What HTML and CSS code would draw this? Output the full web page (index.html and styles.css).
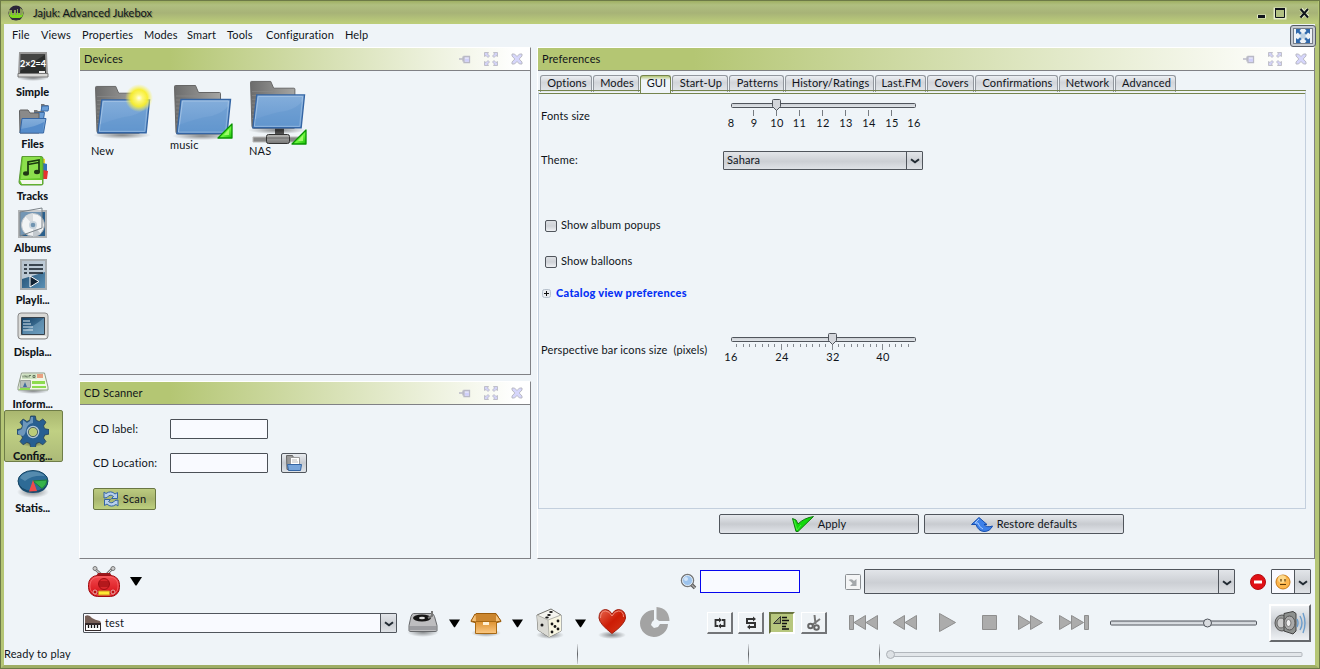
FILE: index.html
```html
<!DOCTYPE html>
<html lang="en">
<head>
<meta charset="utf-8">
<title>Jajuk: Advanced Jukebox</title>
<link rel="stylesheet" href="styles.css">
</head>
<body>
<svg class="defs" width="0" height="0">
  <defs>
    <linearGradient id="gGray" x1="0" y1="0" x2="1" y2="0"><stop offset="0" stop-color="#6c6c6c"/><stop offset="1" stop-color="#a5a5a3"/></linearGradient>
    <linearGradient id="gBlue" x1="0" y1="0" x2="0" y2="1"><stop offset="0" stop-color="#84aedb"/><stop offset="1" stop-color="#6497cf"/></linearGradient>
    <linearGradient id="gNavy" x1="0" y1="0" x2="1" y2="1"><stop offset="0" stop-color="#123e62"/><stop offset="1" stop-color="#5d93b8"/></linearGradient>
    <linearGradient id="gSilver" x1="0" y1="0" x2="0" y2="1"><stop offset="0" stop-color="#b5b5b3"/><stop offset="1" stop-color="#777"/></linearGradient>
    <linearGradient id="gTrack" x1="0" y1="0" x2="0" y2="1"><stop offset="0" stop-color="#c8ccd2"/><stop offset="1" stop-color="#e4e8ec"/></linearGradient>
    <linearGradient id="gRed" x1="0" y1="0" x2="0" y2="1"><stop offset="0" stop-color="#f34c50"/><stop offset="1" stop-color="#d30b12"/></linearGradient>
    <linearGradient id="gHeart" x1="0" y1="0" x2="1" y2="1"><stop offset="0" stop-color="#e86850"/><stop offset=".5" stop-color="#cc1c05"/><stop offset="1" stop-color="#d63a1c"/></linearGradient>
    <linearGradient id="gBox" x1="0" y1="0" x2="0" y2="1"><stop offset="0" stop-color="#dd9232"/><stop offset="1" stop-color="#fbc882"/></linearGradient>
    <linearGradient id="gCorner" x1="0" y1="0" x2="1" y2="1"><stop offset="0" stop-color="#1fc40c"/><stop offset=".6" stop-color="#6cf63e"/><stop offset="1" stop-color="#12b804"/></linearGradient>
    <radialGradient id="gGlow"><stop offset="0" stop-color="#fffff0"/><stop offset=".25" stop-color="#fdf77a"/><stop offset=".6" stop-color="#f8ee2c" stop-opacity=".95"/><stop offset="1" stop-color="#f6f06a" stop-opacity="0"/></radialGradient>
    <radialGradient id="gShadow"><stop offset="0" stop-color="#000" stop-opacity=".45"/><stop offset="1" stop-color="#000" stop-opacity="0"/></radialGradient>
    <symbol id="pin" viewBox="0 0 12 12"><path d="M0 6H4M4 3.500v5M5 3.500h5.500v6H5z" fill="#e2e2fa" stroke="#b9b9c6" stroke-width="1.300"/><path d="M6 6h4v2.500H6z" fill="#d0d0fa"/></symbol>
    <symbol id="expand" viewBox="0 0 14 14"><g fill="#d3d3f8" stroke="#b5b5be" stroke-width=".8"><path d="M.5.500h4L3.500 2 5.500 4 4 5.500 2 3.500.500 4.500z"/><path d="M13.500.500v4L12 3.500 10 5.500 8.500 4 10.500 2 9.500.500z"/><path d="M.5 13.500v-4l1.500 1 2-2L5.500 10l-2 2 1 1.500z"/><path d="M13.500 13.500h-4l1-1.500-2-2L10 8.500l2 2 1.500-1z"/></g></symbol>
    <symbol id="close" viewBox="0 0 12 12"><path d="M1 1h2.500L6 3.500 8.500 1H11v2L8.200 6 11 9v2H8.500L6 8.500 3.500 11H1V9l2.800-3L1 3z" fill="#d6d6fb" stroke="#b5b5be" stroke-width=".9"/></symbol>
    <symbol id="folder" viewBox="0 0 62 56"><ellipse cx="30" cy="52" rx="30" ry="4" fill="url(#gShadow)"/><path d="M2.500 2.500q0-1 1-1h20l3 7h21q1 0 1 1V49q0 1-1 1H6q-2 0-2-2z" fill="url(#gGray)" stroke="#666" /><path d="M4 12h22M4 16h22M4 20h5M4 24h5M4 28h5M4 32h5M4 36h4M4 40h4" stroke="#8e8e8e" opacity=".6"/><path d="M9 15.500h49.500L55 49.500H5z" fill="url(#gBlue)" stroke="#3465a4" stroke-width="1.400"/><path d="M10.500 17h46L53.500 48H6.500z" fill="none" stroke="#a9c7e6" stroke-width=".8"/><path d="M7 41Q25 34 40 32 52 28 56 22l-2 26H7z" fill="#5c92cc" opacity=".35"/></symbol>
    <symbol id="corner" viewBox="0 0 16 16"><path d="M1 15L15 1v14z" fill="url(#gCorner)" stroke="#089400" stroke-width="1.300" stroke-linejoin="round"/><path d="M7 12l5-6v6z" fill="#b5ff7c" opacity=".75"/></symbol>
    <symbol id="down" viewBox="0 0 12 9"><path d="M0 0h12L6.500 8.500h-1z" fill="#000"/></symbol>
    <symbol id="chev" viewBox="0 0 10 6"><path d="M1 1.200L5 4.300 9 1.200" fill="none" stroke="#222b33" stroke-width="2"/></symbol>
  </defs>
</svg>

<div class="window">
  <header class="titlebar">
    <svg class="app-icon" width="16" height="16" viewBox="0 0 16 16"><circle cx="8" cy="8" r="7.500" fill="#2b2638"/><path d="M1 5h3v3h2V5h2v3h1V4h1v4h2V3l3 2v5H1z" fill="#8c9c5c"/><path d="M1 8l2 2V7h1v3h2V8h1v2h2V7h1v3h1V8h1v2h2V8l1 1q0 3-2 4H3Q1 11 1 8z" fill="#7ed81f"/><path d="M2 12q6 3 12 0l-2 3H4z" fill="#35323f"/></svg>
    <span class="title">Jajuk: Advanced Jukebox</span>
    <svg width="52" height="14" viewBox="0 0 52 14"><g fill="none" stroke="#e4ebc8" stroke-width="4"><path d="M0 10.500h9M18.500 3.500h9v8h-9zM44 3l7 8M51 3l-7 8"/></g><path d="M1 9h7v3H1z" fill="#10141c"/><path d="M18.500 3.500h9v8h-9z" fill="#b2c083" stroke="#10141c"/><path d="M18 3h10" stroke="#10141c" stroke-width="2"/><path d="M43.500 3l7.500 8.500M51 3L43.500 11.500" stroke="#10141c" stroke-width="2"/></svg>
  </header>

  <nav class="menubar">
    <span class="m1">File</span><span class="m2">Views</span><span class="m3">Properties</span><span class="m4">Modes</span><span class="m5">Smart</span><span class="m6">Tools</span><span class="m7">Configuration</span><span class="m8">Help</span>
    <button class="fullscreen"><svg width="14" height="14" viewBox="0 0 14 14"><path d="M2 2l10 10M12 2L2 12" stroke="#bcd0e2" stroke-width="3"/><path d="M0 0h5L3.500 2 5.500 4 4 5.500 2 3.500 0 5zM14 0v5l-2-1.500L10 5.500 8.500 4l2-2L9 0zM0 14V9l2 1.500 2-2L5.500 10l-2 2L5 14zM14 14H9l1.500-2-2-2L10 8.500l2 2L14 9z" fill="#2f68ac"/></svg></button>
  </nav>

  <div class="main">
    <aside class="perspectives">
      <div class="persp"><svg width="32" height="32" viewBox="0 0 32 32"><ellipse cx="16" cy="27" rx="16" ry="3" fill="url(#gShadow)"/><path d="M3 2h26l1 21H2z" fill="#2b2d2c" stroke="#999" stroke-width="2"/><path d="M3 3h26L3 20z" fill="#555" opacity=".6"/><path d="M1 22.500h30V26H1z" fill="#d7d7d5" stroke="#777"/><path d="M22 20h6v2h-6z" fill="#eee"/><text class="board" x="16" y="16">2×2=4</text></svg><span>Simple</span></div>
      <div class="persp"><svg width="32" height="32" viewBox="0 0 32 32"><g><path d="M17 7h3l1 1h6v9H17zM24 1h3l1 1h3v6h-7z" fill="#777"/><path d="M17.500 9.500h10l-1 7h-10zM25 3h7l-1 5h-7z" fill="#6b9ed6" stroke="#3d6da8"/></g><path d="M2.500 8q0-1 1-1H11l2 3h9v20H3z" fill="#8a8a8a" stroke="#5f5f5f"/><path d="M5 15.500h24L26.500 30H3z" fill="url(#gBlue)" stroke="#3465a4"/><path d="M4 26q14-2 23-7l-1.500 10H4z" fill="#558ccb"/></svg><span>Files</span></div>
      <div class="persp"><svg width="32" height="32" viewBox="0 0 32 32"><path d="M24 3l4 1v8h-4z" fill="#f1d32b"/><path d="M26 8l4 1v8h-4z" fill="#3470bb"/><path d="M26 15l5 1-1 8h-4z" fill="#e5322f"/><path d="M5 1.500h19q2 0 2 2V29q0 1-2 1H4q-2-1-2-3z" fill="#68c82b" stroke="#5a9a34"/><path d="M3 25h22v4H5z" fill="#f4f8ee"/><path d="M6 2h17v21L4 24z" fill="#9be85b" opacity=".7"/><path d="M11 18V7l11-2v12M11 9.500l11-2" fill="none" stroke="#1b3a10" stroke-width="1.700"/><ellipse cx="9" cy="18.500" rx="3" ry="2.200" fill="#203615"/><ellipse cx="20" cy="17" rx="3" ry="2.200" fill="#203615"/></svg><span>Tracks</span></div>
      <div class="persp"><svg width="32" height="32" viewBox="0 0 32 32"><path d="M2 4h27v26H2z" fill="#2a5f8c" stroke="#b0b3b5" stroke-width="2"/><circle cx="16" cy="18" r="11.500" fill="#eceef0" stroke="#9da4aa"/><path d="M16 18L8 9l8-3zM16 18l8 9-8 3z" fill="#c3c9ce"/><circle cx="16" cy="18" r="4" fill="#aebfcb"/><circle cx="16" cy="18" r="2.300" fill="#245b88"/><path d="M3 5L25 1v20L3 29z" fill="#fff" fill-opacity=".35" stroke="#7b8389"/></svg><span>Albums</span></div>
      <div class="persp"><svg width="32" height="32" viewBox="0 0 32 32"><path d="M4 1h25v29H4z" fill="url(#gNavy)" stroke="#a7adb0" stroke-width="2"/><path d="M5 2h23v11L5 20z" fill="#dfe4e8" opacity=".8"/><path d="M7 6h3M7 10h3M7 14h3M12 6h14M12 10h14M12 14h14" stroke="#111b24" stroke-width="1.700"/><path d="M13 17l9 5.500-9 5.500z" fill="#123" stroke="#fff"/></svg><span>Playli<span class="dots">...</span></span></div>
      <div class="persp"><svg width="32" height="32" viewBox="0 0 32 32"><rect x="1" y="2" width="30" height="26" rx="3" fill="#d9d9d6" stroke="#888"/><path d="M4.500 6.500h23v17h-23z" fill="url(#gNavy)" stroke="#39424b"/><path d="M6 20Q16 16 27 7v16H6z" fill="#7fabc8" opacity=".5"/><path d="M6 10h7M6 13h8M6 16h10M6 19h10" stroke="#dce8f0"/><path d="M3 25h26v2H3z" fill="#f4f4f2"/></svg><span>Displa<span class="dots">...</span></span></div>
      <div class="persp"><svg width="32" height="32" viewBox="0 0 32 32"><ellipse cx="16" cy="28" rx="16" ry="3" fill="url(#gShadow)"/><path d="M4.500 10h23l3.500 14v3H1v-3z" fill="#f0f7e8" stroke="#8f9b87"/><path d="M5.500 11h14v5H5z" fill="#cfe2c2"/><path d="M6 14.500v-2M8 14.500v-2l2 2v-2M12 14.500v-2h2M16 12.500h2v2h-2z" fill="none" stroke="#667760"/><path d="M20 11h6v4h-6z" fill="#e8a181"/><path d="M3.500 17.500h10v7H3z" fill="#b7bfb9" stroke="#9aa19a"/><path d="M8 19l2 5H6z" fill="#416c9b"/><path d="M15 18h13v3H15zM15 23h14v2H15zM3 25h10v2H2z" fill="#8ddb50"/></svg><span>Inform<span class="dots">...</span></span></div>
      <div class="persp selected"><svg width="32" height="32" viewBox="0 0 32 32"><ellipse cx="16" cy="28" rx="13" ry="4" fill="url(#gShadow)"/><path d="M13.700 1h4.600l.9 4.300 3 1.200 3.600-2.500 3.200 3.200-2.500 3.700 1.200 2.800 4.300.9v4.500l-4.300.9-1.200 3 2.500 3.600-3.200 3.200-3.700-2.500-2.900 1.200-.9 4.300h-4.600l-.9-4.300-2.900-1.200-3.700 2.500L3 26.600l2.500-3.700-1.200-2.900L0 19.100v-4.500l4.300-.9 1.200-2.800L3 7.200 6.200 4l3.700 2.500 2.900-1.200z" fill="#285f91" stroke="#253f57" stroke-width=".8"/><path d="M6 5l4 3 3-2 1-4h2l0 6q-6 1-7 7t-4 6l-4-2v-3l4-2 1-4z" fill="#92b5d2" opacity=".65"/><circle cx="16" cy="17" r="5.500" fill="#bacc78" stroke="#b3c8d7" stroke-width="1.500"/><circle cx="16" cy="17" r="4.600" fill="#bdcd79" stroke="#314b60" stroke-width=".8"/></svg><span>Config<span class="dots">...</span></span></div>
      <div class="persp"><svg width="32" height="32" viewBox="0 0 32 32"><ellipse cx="16" cy="25" rx="16" ry="6" fill="url(#gShadow)"/><path d="M1 14v2q2 10 15 10t15-10v-2z" fill="#174b6f"/><ellipse cx="16" cy="14" rx="15" ry="10.500" fill="#2e6b96" stroke="#184765"/><path d="M3 11Q6 5 16 4.500 23 4.500 28 9q-13-1-20 5z" fill="#76a5c2" opacity=".55"/><path d="M16 14l14-1q0 5-5 8.500z" fill="#36b34b" stroke="#1d7e36"/><path d="M16 13l4 11-8 .5z" fill="#ee4b4b"/></svg><span>Statis<span class="dots">...</span></span></div>
    </aside>

    <div class="left-col">
      <section class="view devices">
        <h2 class="view-head"><span>Devices</span><svg width="12" height="12"><use href="#pin"/></svg><svg width="14" height="14"><use href="#expand"/></svg><svg width="12" height="12"><use href="#close"/></svg></h2>
        <div class="device-list">
          <figure class="dev new"><svg width="64" height="60" viewBox="0 0 64 60"><use href="#folder" x="2" y="5" width="60" height="54"/><circle cx="48" cy="18" r="14" fill="url(#gGlow)"/></svg><figcaption>New</figcaption></figure>
          <figure class="dev music"><svg width="66" height="58" viewBox="0 0 66 58"><use href="#folder" x="2" y="2" width="62" height="56"/><use href="#corner" x="47" y="41" width="16" height="16"/></svg><figcaption>music</figcaption></figure>
          <figure class="dev nas"><svg width="62" height="66" viewBox="0 0 62 66"><path d="M4 57h52v5H4z" fill="#888" stroke="#bbb"/><path d="M26 48h9v8h-9z" fill="#555"/><rect x="17.500" y="54.500" width="23" height="9" rx="2" fill="url(#gSilver)" stroke="#333"/><path d="M18 58h22" stroke="#666"/><use href="#folder" x="-1" y="0" width="60" height="54"/><use href="#corner" x="42" y="49" width="16" height="16"/></svg><figcaption>NAS</figcaption></figure>
        </div>
      </section>
      <section class="view scanner">
        <h2 class="view-head"><span>CD Scanner</span><svg width="12" height="12"><use href="#pin"/></svg><svg width="14" height="14"><use href="#expand"/></svg><svg width="12" height="12"><use href="#close"/></svg></h2>
        <div class="scan-form">
          <div class="scan-row"><label>CD label:</label><input class="text-in" type="text"></div>
          <div class="scan-row"><label>CD Location:</label><input class="text-in" type="text"><button class="browse"><svg width="16" height="16" viewBox="0 0 16 16"><path d="M.5.500h6l1 2h5v12H1z" fill="#999" stroke="#666"/><path d="M4.500 2.500h9v9h-9z" fill="#fff" stroke="#999"/><path d="M6 5h5M6 7h6" stroke="#bbb"/><path d="M1.500 9.500h14l-1 6h-12z" fill="#76a4da" stroke="#3465a4"/></svg></button></div>
          <button class="scan-btn"><svg width="16" height="16" viewBox="0 0 16 16"><path d="M1 7V1l2 1.500Q8-1 12 3l2.500-1.500V7.500H8.500l2-2Q7 2.500 4 6.500z" fill="#b8d0ec" stroke="#3465a4"/><path d="M15 9v6l-2-1.500Q8 17 4 13l-2.500 1.500V8.500h6l-2 2Q9 13.500 12 9.500z" fill="#b8d0ec" stroke="#3465a4"/></svg><span>Scan</span></button>
        </div>
      </section>
    </div>

    <section class="view prefs">
      <h2 class="view-head"><span>Preferences</span><svg width="12" height="12"><use href="#pin"/></svg><svg width="14" height="14"><use href="#expand"/></svg><svg width="12" height="12"><use href="#close"/></svg></h2>
      <div class="tabs">
        <span class="tab t1">Options</span><span class="tab t2">Modes</span><span class="tab t3 active">GUI</span><span class="tab t4">Start-Up</span><span class="tab t5">Patterns</span><span class="tab t6">History/Ratings</span><span class="tab t7">Last.FM</span><span class="tab t8">Covers</span><span class="tab t9">Confirmations</span><span class="tab t10">Network</span><span class="tab t11">Advanced</span>
      </div>
      <div class="tab-page">
        <div class="pref-row fonts"><label>Fonts size</label>
          <svg class="slider" width="200" height="36" viewBox="0 0 200 36"><rect x="8.500" y="9.500" width="184" height="4" rx="1" fill="url(#gTrack)" stroke="#50555c"/><path d="M30.500 16v6M53.500 16v6M76.500 16v6M99.500 16v6M122.500 16v6M145.500 16v6M168.500 16v6" stroke="#777c82"/><path d="M49.500 6.500q0-1 1-1h6q1 0 1 1v6l-4 4-4-4z" fill="#d3d6db" stroke="#50555c"/><g class="tick-labels"><text x="8" y="33">8</text><text x="31" y="33">9</text><text x="54" y="33">10</text><text x="76.500" y="33">11</text><text x="100" y="33">12</text><text x="123" y="33">13</text><text x="146" y="33">14</text><text x="169" y="33">15</text><text x="191" y="33">16</text></g></svg>
        </div>
        <div class="pref-row theme"><label>Theme:</label><div class="combo"><span>Sahara</span><i class="drop"><svg width="10" height="6"><use href="#chev"/></svg></i></div></div>
        <label class="check album"><i></i>Show album popups</label>
        <label class="check balloons"><i></i>Show balloons</label>
        <div class="catalog"><svg width="9" height="9" viewBox="0 0 9 9"><rect x=".5" y=".5" width="8" height="8" rx="2" fill="#e7eaef" stroke="#b7c1cc"/><path d="M2 4.500h5M4.500 2v5" stroke="#111"/></svg><b>Catalog view preferences</b></div>
        <div class="pref-row icons"><label>Perspective bar icons size&nbsp; (pixels)</label>
          <svg class="slider" width="200" height="36" viewBox="0 0 200 36"><rect x="8.500" y="9.500" width="184" height="4" rx="1" fill="url(#gTrack)" stroke="#50555c"/><path d="M13.500 16v3M20.500 16v3M26.500 16v3M32.500 16v3M39.500 16v3M45.500 16v3M51.500 16v3M64.500 16v3M70.500 16v3M77.500 16v3M83.500 16v3M89.500 16v3M96.500 16v3M102.500 16v3M115.500 16v3M121.500 16v3M128.500 16v3M134.500 16v3M140.500 16v3M147.500 16v3M153.500 16v3M166.500 16v3M172.500 16v3M178.500 16v3M185.500 16v3M58.500 16v6M109.500 16v6M159.500 16v6" stroke="#858a90"/><path d="M105.500 6.500q0-1 1-1h6q1 0 1 1v6l-4 4-4-4z" fill="#d3d6db" stroke="#50555c"/><g class="tick-labels"><text x="8" y="33">16</text><text x="59" y="33">24</text><text x="110" y="33">32</text><text x="160" y="33">40</text></g></svg>
        </div>
      </div>
      <div class="actions">
        <button class="wide"><svg width="22" height="16" viewBox="0 0 22 16"><path d="M.5 2.500L4 4l2 4Q12 2 21.500.500L6 15.500H4z" fill="#13d90c" stroke="#127a10"/><path d="M2 4l3 10 4-5" fill="none" stroke="#49f03d"/></svg><span>Apply</span></button>
        <button class="wide restore"><svg width="22" height="15" viewBox="0 0 22 15"><path d="M8 .5L.500 7.500H5Q7 14 13 14.500 19 14.500 21.500 9 16 11 13 7.500H16z" fill="#3d80e8" stroke="#164eae"/><path d="M8 2L4 6h3q1 4 5 6" fill="none" stroke="#a6cbff"/></svg><span>Restore defaults</span></button>
      </div>
    </section>
  </div>

  <div class="bar search-bar">
    <svg class="radio" width="34" height="32" viewBox="0 0 34 32"><path d="M8 3l9 8 8-8" fill="none" stroke="#777" stroke-width="2.500"/><path d="M8 3l9 8 8-8" fill="none" stroke="#ddd"/><circle cx="8" cy="2.500" r="2" fill="#ccc" stroke="#777"/><circle cx="26" cy="2.500" r="2" fill="#ccc" stroke="#777"/><path d="M11 7h12l2 3H9z" fill="#99191d"/><rect x="1.500" y="9.500" width="31" height="21" rx="9" fill="url(#gRed)" stroke="#a10d12"/><rect x="3" y="11" width="28" height="18" rx="8" fill="none" stroke="#f8696c" stroke-width=".8"/><circle cx="17" cy="18" r="5.500" fill="#d9272b" stroke="#a10d12"/><path d="M12 16h10M11.500 18h11M12 20h10" stroke="#8f0a0e"/><circle cx="8" cy="26" r="2" fill="#b11" stroke="#e9aaaa"/><circle cx="26" cy="26" r="2" fill="#b11" stroke="#e9aaaa"/><path d="M11.500 25h11v4h-11z" fill="#ffe833" stroke="#c89325"/></svg>
    <svg class="arrow-a" width="12" height="9"><use href="#down"/></svg>
    <svg class="lens" width="17" height="17" viewBox="0 0 17 17"><path d="M11 11l4 4" stroke="#555" stroke-width="3.500"/><path d="M11 11l4 4" stroke="#aaa" stroke-width="1.500"/><circle cx="7.500" cy="7.500" r="6" fill="#9cc3ed" stroke="#777" stroke-width="1.500"/><circle cx="7.500" cy="7.500" r="5" fill="none" stroke="#e3edf6"/><circle cx="6" cy="6" r="2" fill="#d2e5f8"/></svg>
    <input class="search" type="text">
    <svg class="goto" width="16" height="16" viewBox="0 0 16 16"><rect x=".5" y=".5" width="15" height="15" rx="1" fill="#f4f5f6" stroke="#8b8f93"/><path d="M3.500 6Q7 4 9 7l2.500-2v7H5l2.500-2.500Q6 7 3.500 6z" fill="#a4a8ab"/></svg>
    <div class="combo history"><span></span><i class="drop"><svg width="10" height="6"><use href="#chev"/></svg></i></div>
    <svg class="ban" width="16" height="16" viewBox="0 0 16 16"><circle cx="8" cy="8" r="7.500" fill="#e01015" stroke="#b30c10"/><path d="M4 6.500h8v3H4z" fill="#fff"/></svg>
    <div class="combo mood"><span><svg width="16" height="16" viewBox="0 0 16 16"><circle cx="8" cy="8" r="7" fill="#fcb64d" stroke="#c97a16"/><circle cx="7" cy="5" r="4" fill="#fff0b8" opacity=".6"/><path d="M6 5v2.500M10 5v2.500M5 10.500h6" stroke="#5c3a09" stroke-width="1.200"/></svg></span><i class="drop"><svg width="10" height="6"><use href="#chev"/></svg></i></div>
  </div>

  <div class="bar player-bar">
    <div class="combo ambience"><span><svg width="16" height="16" viewBox="0 0 16 16"><path d="M0 9V1q4-2 7 2 3 2 8 3 1 1 1 3z" fill="#765f57"/><path d="M0 8h16v8H0z" fill="#33292a"/><path d="M1 10h14v5H1z" fill="#fff"/><path d="M3.500 10v3M6.500 10v3M9.500 10v3M12.500 10v3" stroke="#111" stroke-width="1.300"/></svg>test</span><i class="drop"><svg width="10" height="6"><use href="#chev"/></svg></i></div>
    <svg class="ic deck" width="32" height="32" viewBox="0 0 32 32"><ellipse cx="16" cy="25" rx="16" ry="5" fill="url(#gShadow)"/><path d="M6.500 6.500h18q2 0 3 3l2.500 9v5q0 1-2 1H4q-2 0-2-1v-5l2-9q1-3 2.500-3z" fill="#bdbdbf" stroke="#66686b"/><path d="M3 19h26v4H3z" fill="#9b9ca0"/><ellipse cx="15" cy="11" rx="9" ry="3.500" fill="#151515"/><ellipse cx="15" cy="11" rx="3" ry="1.200" fill="#ddd"/><path d="M25 4v5l-4 2" fill="none" stroke="#777" stroke-width="2"/></svg>
    <svg class="dd" width="11" height="9"><use href="#down"/></svg>
    <svg class="ic box" width="32" height="32" viewBox="0 0 32 32"><ellipse cx="16" cy="26" rx="15" ry="4" fill="url(#gShadow)"/><path d="M6 6.500h20l5 8-4 1H5l-4-1z" fill="#e8a754" stroke="#9b5c0c"/><path d="M6 7h20v7H6z" fill="#cb862f"/><path d="M5.500 14.500h21v12h-21z" fill="url(#gBox)" stroke="#a86914"/><path d="M5 7L1 14l5 1M26 7l5 7-5 1" fill="#f6c178" stroke="#9b5c0c"/><path d="M13 15h6v3h-6z" fill="#fff0d4"/></svg>
    <svg class="dd" width="11" height="9"><use href="#down"/></svg>
    <svg class="ic dice" width="32" height="32" viewBox="0 0 32 32"><ellipse cx="17" cy="28" rx="14" ry="4" fill="url(#gShadow)"/><path d="M18 2L4 8l1 15 11 7 12-6V8z" fill="#f4f4ef" stroke="#73736e"/><path d="M4 8l11 5 1 17L5 23z" fill="#dadad4"/><path d="M15 13l13-5v16l-12 6z" fill="#f8f6e2"/><path d="M4 8l11 5 13-5M15 13l1 16" fill="none" stroke="#b0b0a9"/><g fill="#171717"><ellipse cx="18" cy="5" rx="1.800" ry="1"/><ellipse cx="16" cy="8" rx="1.800" ry="1"/><ellipse cx="14" cy="10.500" rx="1.800" ry="1"/><circle cx="9" cy="18" r="1.500"/><circle cx="19" cy="17" r="1.400"/><circle cx="25" cy="14" r="1.400"/><circle cx="22" cy="19.500" r="1.400"/><circle cx="19" cy="25" r="1.400"/><circle cx="25" cy="22" r="1.400"/></g></svg>
    <svg class="dd" width="11" height="9"><use href="#down"/></svg>
    <svg class="ic heart" width="32" height="32" viewBox="0 0 32 32"><ellipse cx="16" cy="28" rx="14" ry="4" fill="url(#gShadow)"/><path d="M16 26.500Q3.500 17 3 11 3 3 9.500 2.500q4 0 6.500 4.500Q18.500 2.500 22.500 2.500q7 .5 7 8.500-.5 6-13.500 15.500z" fill="url(#gHeart)" stroke="#9e1c0d"/><path d="M4.500 11q0-7 5-7 4 0 6.500 5Q18.500 4 22.500 4q5 0 5 6" fill="none" stroke="#ef8c7b"/></svg>
    <svg class="ic pie" width="32" height="32" viewBox="0 0 32 32"><path d="M15 3A14 13.500 0 1 0 29 17h-8l-2 3-4 1-3-3 1-3 2-2z" fill="#a3a3a3"/><path d="M17.500 0Q30 1 30.500 14H20l-2.500-2z" fill="#a6a6a6"/></svg>
    <div class="modes">
      <span class="mode"><svg width="14" height="14" viewBox="0 0 14 14"><path d="M6 4H2.500v6H5M8 10h3.500V4H9" fill="none" stroke="#333" stroke-width="1.800"/><path d="M6 1.500L9 4 6 6.500zM8 7.500L5 10l3 2.500z" fill="#333"/></svg></span>
      <span class="mode"><svg width="14" height="14" viewBox="0 0 14 14"><path d="M10 3H3v4h8v4H5" fill="none" stroke="#333" stroke-width="2"/><path d="M9 0.500L12 3 9 5.500zM6 8.500L3 11l3 2.500z" fill="#333"/></svg></span>
      <span class="mode on"><svg width="18" height="14" viewBox="0 0 18 14"><path d="M.5 7.500L7.500.500v7z" fill="#8f9b69" stroke="#333"/><path d="M9 1.500h5M9 4.500h7M9 7.500h5M9 10.500h4M9 13h7" stroke="#111" stroke-width="1.700"/></svg></span>
      <span class="mode"><svg width="14" height="16" viewBox="0 0 14 16"><path d="M7.500 0l1 9M13 4L5 10" stroke="#777" stroke-width="2"/><circle cx="3.500" cy="11" r="2.300" fill="none" stroke="#666" stroke-width="2"/><circle cx="9.500" cy="12.500" r="2.300" fill="none" stroke="#666" stroke-width="2"/></svg></span>
    </div>
    <svg class="transport" width="242" height="22" viewBox="0 0 242 22"><g fill="#acacac" stroke="#8e8e8e"><path d="M1.500 3.500h4v14h-4zM17.500 3.500v14L6 10.500zM29.500 3.500v14L18 10.500z"/><path d="M56.500 3.500v14L45 10.500zM68.500 3.500v14L57 10.500z"/><path d="M91.500 1.500v18l16-9z"/><path d="M134.500 3.500h14v14h-14z"/><path d="M170.500 3.500v14l12-7zM182.500 3.500v14l12-7z"/><path d="M211.500 3.500v14l12-7zM223.500 3.500v14l12-7zM236.500 3.500h4v14h-4z"/></g></svg>
    <svg class="volume" width="148" height="12" viewBox="0 0 148 12"><rect x=".5" y="4" width="146" height="4" rx="1" fill="url(#gTrack)" stroke="#50555c"/><circle cx="97.500" cy="6" r="4" fill="#d9dce0" stroke="#50555c"/></svg>
    <button class="mute"><svg width="32" height="24" viewBox="0 0 32 24"><ellipse cx="8" cy="12" rx="7" ry="8" fill="#9b9d9c" stroke="#555"/><ellipse cx="7" cy="12" rx="4" ry="5" fill="#ccc" stroke="#666"/><path d="M10 2.500l9-2 3 2V20l-3 3-9-3z" fill="#8d908e" stroke="#444"/><ellipse cx="15.500" cy="12" rx="5.500" ry="7" fill="#aaa" stroke="#555"/><ellipse cx="14.500" cy="12" rx="2.500" ry="3.500" fill="#eee" stroke="#777"/><path d="M23 8q2 4 0 8M26 5q4 7 0 14M29 2q4 10 0 20" fill="none" stroke="#6c9dcc" stroke-width="1.400"/></svg></button>
  </div>

  <footer class="status">
    <span class="st-text">Ready to play</span><i class="sep s1"></i><i class="sep s2"></i><i class="sep s3"></i>
    <svg class="progress" width="418" height="10" viewBox="0 0 418 10"><rect x="4" y="3.500" width="412" height="4" rx="1" fill="#e2e6ea" stroke="#b2b7bd"/><circle cx="4.500" cy="5.500" r="4" fill="#dde1e5" stroke="#acb1b7"/></svg>
  </footer>
</div>
</body>
</html>
```
FILE: styles.css
```css
* { box-sizing: border-box; }
body {
  margin: 0;
  font: 11px/14px Lato, sans-serif;
  letter-spacing: 0.14px;
  color: #10141a;
  overflow: hidden;
}
svg { display: block; flex: none; }
.defs { position: absolute; }
button, input { font: inherit; letter-spacing: inherit; color: inherit; margin: 0; padding: 0; }
h2, figure { margin: 0; }

.window {
  width: 1320px;
  height: 669px;
  background: #eff4f8;
  border: solid #b5c676;
  border-width: 0 5px 4px 4px;
  border-bottom-color: #9fae66;
  outline: 1px solid #6d7a47;
  outline-offset: -1px;
  display: flex;
  flex-direction: column;
}

.titlebar {
  height: 24px;
  flex: none;
  margin: 0 -3px;
  padding: 1px 9px 0 7px;
  border-top: 1px solid #6d7a47;
  background: linear-gradient(#9fb063 0, #b0bf80 4px, #a7b377 12px, #bccd7a 22px);
  display: flex;
  align-items: center;
}
.title { margin-left: 9px; flex: 1; text-shadow: 1px 1px 1px #6f7b4a; letter-spacing: 0; }

.menubar { height: 23px; flex: none; display: flex; align-items: center; padding-left: 8px; }
.menubar span { white-space: nowrap; flex: none; padding-bottom: 1px; }
.m1 { width: 29px; }
.m2 { width: 41px; }
.m3 { width: 62px; }
.m4 { width: 43px; }
.m5 { width: 40px; }
.m6 { width: 39px; }
.m7 { width: 79px; }
.fullscreen {
  margin: 0 -1px 0 auto;
  width: 26px;
  height: 22px;
  display: grid;
  place-items: center;
  border: 1px solid #555b66;
  border-radius: 3px;
  background: #eef2f7;
  box-shadow: inset 0 0 0 2px #c5cad2, inset 0 0 0 3px #777e89;
}

.main { height: 512px; flex: none; display: flex; }
.perspectives { width: 75px; flex: none; display: flex; flex-direction: column; margin-top: -1px; }
.persp {
  width: 59px;
  height: 52px;
  flex: none;
  padding: 5px 2px 0 0;
  display: flex;
  flex-direction: column;
  align-items: center;
  font: 900 11px/14px Lato, sans-serif;
  letter-spacing: 0;
}
.persp > span { margin-top: 2px; }
.dots { letter-spacing: -0.3px; }
.persp.selected {
  border: 1px solid #6f7d48;
  border-radius: 2px;
  padding-top: 4px;
  background: linear-gradient(#a9b66f, #c0d083 40%, #acba78);
}
.board { font: 900 9px Lato, sans-serif; fill: #fff; letter-spacing: 0; text-anchor: middle; }

.left-col { width: 452px; flex: none; display: flex; flex-direction: column; gap: 6px; }
.view {
  border: 1px solid #808185;
  border-top-color: #fff;
  border-left-color: #fff;
  display: flex;
  flex-direction: column;
}
.devices { height: 328px; flex: none; }
.scanner { flex: 1; }
.prefs { width: 778px; margin-left: 6px; flex: none; }
.view-head {
  height: 23px;
  flex: none;
  border-bottom: 1px solid #808185;
  background: linear-gradient(90deg, #b4c673 0, #b4c673 20%, #fff 97%);
  display: flex;
  align-items: center;
  padding: 0 7px 0 4px;
  font: inherit;
}
.view-head span { flex: 1; }
.view-head svg + svg { margin-left: 13px; }

.device-list { display: flex; padding: 9px 0 0 11px; }
.dev { display: flex; flex-direction: column; }
.new { width: 79px; }
.new figcaption { margin-top: 4px; }
.music { width: 79px; padding-top: 2px; }
.music figcaption { margin-top: -2px; }
.nas { width: 70px; }
.nas figcaption { margin-top: -2px; }

.scan-form { padding: 14px 0 0 13px; display: flex; flex-direction: column; }
.scan-row { display: flex; height: 20px; align-items: center; margin-bottom: 14px; }
.scan-row label { width: 77px; }
.text-in { width: 98px; height: 20px; border: 1px solid #4b5057; border-radius: 1px; background: #f9faff; }
.browse {
  margin-left: 13px;
  width: 26px;
  height: 20px;
  border: 1px solid #50555c;
  border-radius: 2px;
  background: linear-gradient(#e8ebef, #c7cbd1 50%, #dfe3e7);
  display: grid;
  place-items: center;
}
.scan-btn {
  margin-top: 1px;
  width: 63px;
  height: 22px;
  border: 1px solid #697643;
  border-radius: 2px;
  background: linear-gradient(#bccb80, #a8b56f 50%, #bdd07e);
  display: flex;
  align-items: center;
  justify-content: center;
  gap: 4px;
}

.tabs { display: flex; height: 22px; flex: none; padding: 4px 0 0 2px; gap: 1px; }
.tab {
  height: 17px;
  border: 1px solid #92979e;
  border-bottom: 0;
  border-radius: 3px 3px 0 0;
  background: linear-gradient(#eceff3, #d2d5da 40%, #e4e8ec);
  text-align: center;
  line-height: 14px;
  padding-left: 2px;
  white-space: nowrap;
}
.active {
  height: 18px;
  border-color: #75844d;
  background: linear-gradient(#b4c673, #eff4f8 4px);
  position: relative;
}
.t1 { width: 52px; }
.t2 { width: 46px; }
.t3 { width: 31px; }
.t4 { width: 56px; }
.t5 { width: 55px; }
.t6 { width: 89px; }
.t7 { width: 51px; }
.t8 { width: 47px; }
.t9 { width: 83px; }
.t10 { width: 55px; }
.t11 { width: 61px; }
.tab-page {
  width: 768px;
  height: 419px;
  flex: none;
  margin-top: -3px;
  border: 1px solid #c3cfdd;
  border-top: 4px double #75844d;
  padding-left: 2px;
  display: flex;
  flex-direction: column;
}
.pref-row { display: flex; }
.pref-row label { width: 182px; flex: none; white-space: nowrap; }
.fonts { height: 36px; }
.fonts label { padding-top: 15px; }
.tick-labels { text-anchor: middle; fill: #10141a; font-size: 11px; letter-spacing: 0.3px; }
.theme { height: 20px; margin-top: 20px; align-items: center; }
.combo {
  width: 200px;
  height: 19px;
  border: 1px solid #50555c;
  border-radius: 1px;
  background: linear-gradient(#e2e5e9, #cccfd4 55%, #dfe2e6);
  display: flex;
}
.combo > span { flex: 1; display: flex; align-items: center; padding-left: 3px; }
.drop { width: 16px; border-left: 1px solid #50555c; display: grid; place-items: center; padding-top: 2px; }
.check { display: flex; align-items: center; height: 14px; }
.check i {
  width: 12px;
  height: 12px;
  margin: 1px 4px 0 4px;
  border: 1px solid #50555c;
  border-radius: 2px;
  background: linear-gradient(#dcdfe3, #cfd2d7 50%, #eef0f3);
}
.album { margin-top: 48px; }
.balloons { margin-top: 22px; }
.catalog { display: flex; align-items: center; gap: 5px; padding-left: 1px; height: 14px; margin-top: 18px; color: #0530f5; }
.catalog b { font: 900 11px/14px Lato, sans-serif; letter-spacing: 0.3px; }
.icons { margin-top: 28px; }
.icons label { padding-top: 15px; }
.actions { display: flex; gap: 5px; padding: 5px 0 0 181px; }
.wide {
  width: 200px;
  height: 20px;
  border: 1px solid #50555c;
  border-radius: 2px;
  background: linear-gradient(#e6e9ed, #c8cbd0 50%, #e2e5ea);
  display: flex;
  align-items: center;
  justify-content: center;
  gap: 4px;
}

.bar { display: flex; align-items: center; flex: none; }
.search-bar { height: 45px; }
.radio { margin-left: 83px; }
.arrow-a { margin-left: 9px; }
.lens { margin-left: 538px; }
.search { width: 100px; height: 23px; margin-left: 3px; border: 1px solid #0505ee; background: #f9faff; }
.goto { margin-left: 45px; }
.history { width: 371px; height: 25px; margin-left: 3px; }
.ban { margin-left: 15px; }
.mood { width: 40px; height: 25px; margin-left: 5px; }
.mood > span, .ambience > span { background: #f9faff; }
.mood > span { padding-left: 3px; }

.player-bar { height: 38px; }
.ambience { width: 314px; height: 20px; margin-left: 79px; }
.ambience > span { padding-left: 1px; gap: 4px; }
.deck { margin-left: 10px; }
.dd { margin-left: 10px; }
.dd + .ic { margin-left: 10px; }
.pie { margin-left: 11px; }
.modes { display: flex; gap: 5px; margin-left: 36px; }
.mode {
  width: 26px;
  height: 22px;
  display: grid;
  place-items: center;
  border: 1px solid #fff;
  border-right: 2px solid #737578;
  border-bottom: 2px solid #737578;
  background: #eff3f6;
}
.mode:last-child { margin-left: 1px; }
.mode.on { background: #b7c77e; border: 2px solid #fff; border-top-color: #69743f; border-left-color: #69743f; }
.transport { margin-left: 21px; }
.volume { margin-left: 20px; }
.mute {
  margin-left: 11px;
  width: 42px;
  height: 38px;
  border: 2px solid #fff;
  border-right-color: #66696d;
  border-bottom-color: #66696d;
  background: linear-gradient(#eef1f4, #c9cdd2 50%, #eef1f4);
  display: grid;
  place-items: center;
}

.status { flex: 1; display: flex; align-items: center; }
.st-text { width: 573px; }
.sep { width: 1px; height: 20px; background: linear-gradient(#dde1e5, #5f6266 50%, #cfd3d8); }
.s2 { margin-left: 170px; }
.s3 { margin-left: 130px; }
.progress { margin-left: 6px; }
```
